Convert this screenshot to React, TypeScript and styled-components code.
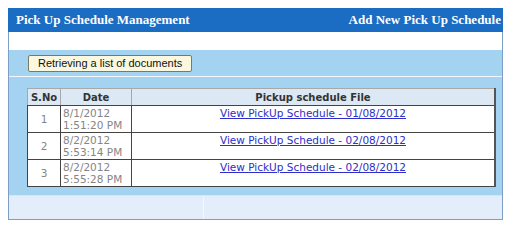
import React from 'react'
import styled, { createGlobalStyle } from 'styled-components'

const GlobalStyle = createGlobalStyle`
  body {
    margin: 8px;
    background: #ffffff;
    font-family: "DejaVu Sans", Verdana, sans-serif;
  }
`

const Panel = styled.div`
  width: 493px;
  border: 1px solid #7d9fc6;
  border-top: none;
  background: #ffffff;
`

const TitleBar = styled.div`
  height: 24px;
  background: #1b6cc3;
  display: flex;
  align-items: center;
  justify-content: space-between;
  padding: 0 2px 0 8px;
  margin: 0 -1px;
`

const Title = styled.span`
  font-family: "Liberation Serif", "Times New Roman", serif;
  font-weight: bold;
  font-size: 13px;
  color: #ffffff;
`

const Spacer = styled.div`
  height: 18px;
`

const Toolbar = styled.div`
  height: 26px;
  background: #a4d3f2;
  display: flex;
  align-items: center;
  padding-left: 19px;
  border-bottom: 1px solid #f2f8fd;
`

const Button = styled.button`
  height: 17px;
  padding: 0 9px;
  font-family: "Liberation Sans", Arial, sans-serif;
  font-size: 11px;
  color: #111;
  background: #fbf8df;
  border: 1px solid #7b7b5a;
  border-radius: 2px;
  line-height: 15px;
`

const Content = styled.div`
  background: #a4d3f2;
  padding: 11px 6px 8px 18px;
`

const Grid = styled.table`
  width: 100%;
  border-collapse: collapse;
  background: #ffffff;
  border: 1px solid #444;
  border-top-color: #9a9a9a;
  border-right: 2px solid #555;
`

const HeadCell = styled.th<{ $w?: number }>`
  width: ${p => (p.$w ? `${p.$w}px` : 'auto')};
  height: 16px;
  padding: 0;
  background: #dce8f4;
  border: 1px solid #a8a8a8;
  border-bottom-color: #444;
  font-size: 10px;
  font-weight: bold;
  color: #333;
  text-align: center;
`

const Cell = styled.td<{ $align?: string; $valign?: string }>`
  height: 24px;
  padding: 1px 2px;
  border: 1px solid #444;
  font-size: 10.5px;
  line-height: 12px;
  color: #858585;
  text-align: ${p => p.$align || 'left'};
  vertical-align: ${p => p.$valign || 'top'};
`

const FileLink = styled.a`
  color: #2e2ec8;
  text-decoration: underline;
  font-size: 10.5px;
`

const Footer = styled.div`
  height: 23px;
  display: grid;
  grid-template-columns: 194px 1fr;
  background: #e4eefa;
  border-top: 1px solid #d6e6f6;
`

const FooterCell = styled.div`
  & + & {
    border-left: 1px solid #f4f8fd;
  }
`

const rows = [
  { no: 1, date: '8/1/2012', time: '1:51:20 PM', file: 'View PickUp Schedule - 01/08/2012' },
  { no: 2, date: '8/2/2012', time: '5:53:14 PM', file: 'View PickUp Schedule - 02/08/2012' },
  { no: 3, date: '8/2/2012', time: '5:55:28 PM', file: 'View PickUp Schedule - 02/08/2012' },
]

export default function App() {
  return (
    <>
      <GlobalStyle />
      <Panel>
        <TitleBar>
          <Title>Pick Up Schedule Management</Title>
          <Title>Add New Pick Up Schedule</Title>
        </TitleBar>
        <Spacer />
        <Toolbar>
          <Button>Retrieving a list of documents</Button>
        </Toolbar>
        <Content>
          <Grid>
            <thead>
              <tr>
                <HeadCell $w={32}>S.No</HeadCell>
                <HeadCell $w={70}>Date</HeadCell>
                <HeadCell>Pickup schedule File</HeadCell>
              </tr>
            </thead>
            <tbody>
              {rows.map(r => (
                <tr key={r.no}>
                  <Cell $align="center" $valign="middle">{r.no}</Cell>
                  <Cell>
                    {r.date}
                    <br />
                    {r.time}
                  </Cell>
                  <Cell $align="center">
                    <FileLink href="#">{r.file}</FileLink>
                  </Cell>
                </tr>
              ))}
            </tbody>
          </Grid>
        </Content>
        <Footer>
          <FooterCell />
          <FooterCell />
        </Footer>
      </Panel>
    </>
  )
}
